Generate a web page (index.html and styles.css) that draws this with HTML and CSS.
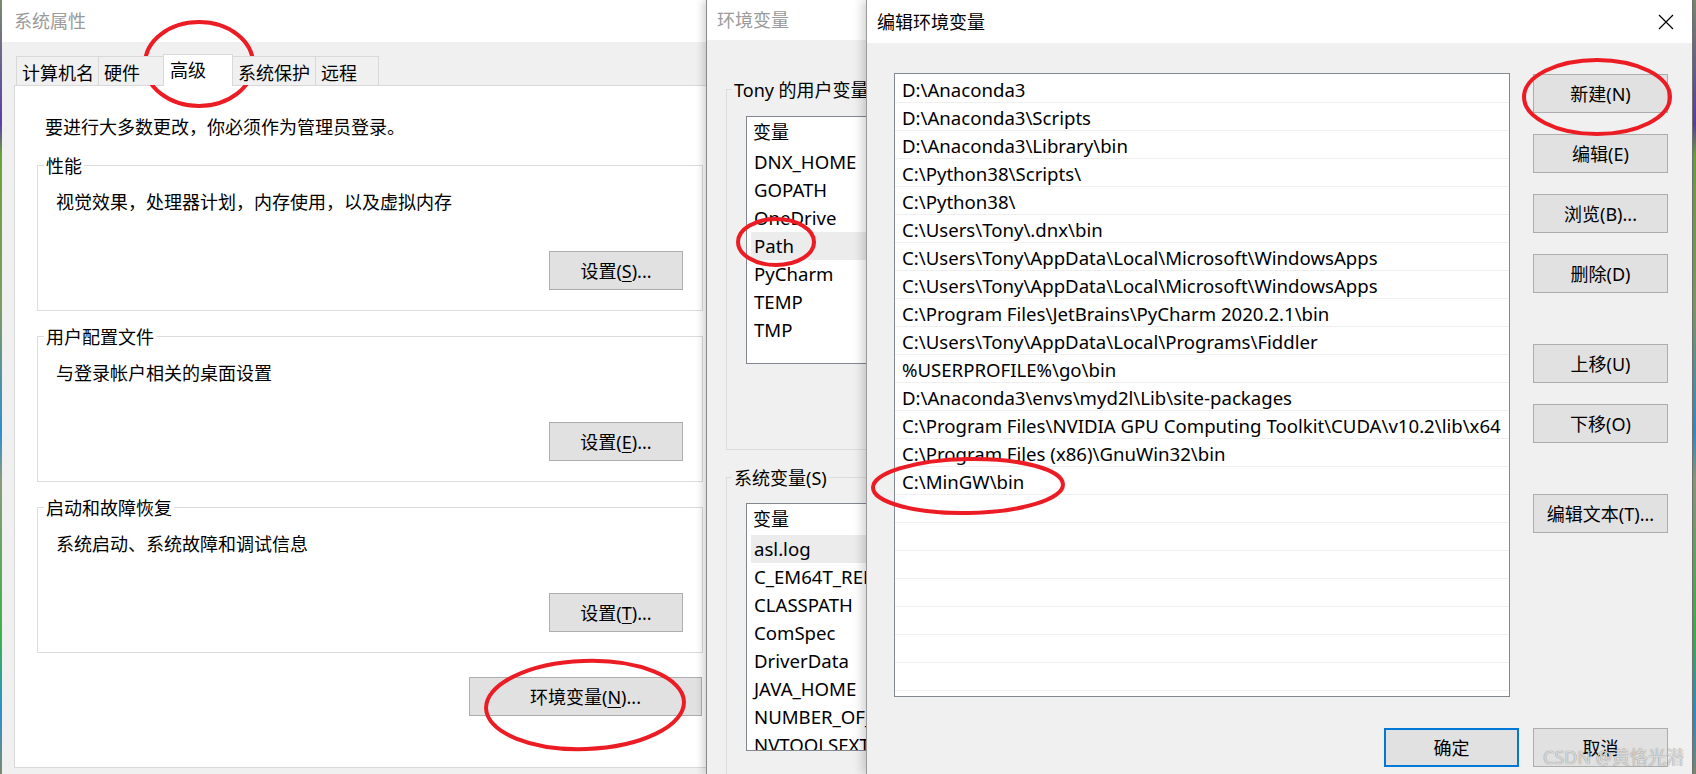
FILE: index.html
```html
<!DOCTYPE html>
<html lang="zh-CN">

<head>
    <meta charset="UTF-8">
    <title>编辑环境变量</title>
    <link rel="stylesheet" href="styles.css">
</head>

<body>
    <div class="desktop">
        <!-- 系统属性 -->
        <div class="window sys">
            <div class="titlebar"><span class="title inactive">系统属性</span></div>
            <div class="sys-body">
                <div class="tabs">
                    <div class="tab t1">计算机名</div>
                    <div class="tab t2">硬件</div>
                    <div class="tab t3 active">高级</div>
                    <div class="tab t4">系统保护</div>
                    <div class="tab t5">远程</div>
                </div>
                <div class="panel">
                    <p class="intro">要进行大多数更改，你必须作为管理员登录。</p>
                    <div class="group">
                        <div class="group-title">性能</div>
                        <div class="group-desc">视觉效果，处理器计划，内存使用，以及虚拟内存</div>
                        <button class="btn btn-set">设置(<u>S</u>)...</button>
                    </div>
                    <div class="group">
                        <div class="group-title">用户配置文件</div>
                        <div class="group-desc">与登录帐户相关的桌面设置</div>
                        <button class="btn btn-set">设置(<u>E</u>)...</button>
                    </div>
                    <div class="group">
                        <div class="group-title">启动和故障恢复</div>
                        <div class="group-desc">系统启动、系统故障和调试信息</div>
                        <button class="btn btn-set">设置(<u>T</u>)...</button>
                    </div>
                    <div class="env-row">
                        <button class="btn btn-env">环境变量(<u>N</u>)...</button>
                    </div>
                </div>
            </div>
        </div>

        <!-- 环境变量 -->
        <div class="window env">
            <div class="titlebar"><span class="title inactive">环境变量</span></div>
            <div class="env-body">
                <div class="env-group user">
                    <div class="group-title">Tony 的用户变量(U)</div>
                    <div class="var-list">
                        <div class="var-head">变量</div>
                        <div class="var-row">DNX_HOME</div>
                        <div class="var-row">GOPATH</div>
                        <div class="var-row">OneDrive</div>
                        <div class="var-row selected">Path</div>
                        <div class="var-row">PyCharm</div>
                        <div class="var-row">TEMP</div>
                        <div class="var-row">TMP</div>
                    </div>
                </div>
                <div class="env-group system">
                    <div class="group-title">系统变量(S)</div>
                    <div class="var-list">
                        <div class="var-head">变量</div>
                        <div class="var-row selected">asl.log</div>
                        <div class="var-row">C_EM64T_REDIST</div>
                        <div class="var-row">CLASSPATH</div>
                        <div class="var-row">ComSpec</div>
                        <div class="var-row">DriverData</div>
                        <div class="var-row">JAVA_HOME</div>
                        <div class="var-row">NUMBER_OF_PROCESSORS</div>
                        <div class="var-row">NVTOOLSEXT_PATH</div>
                    </div>
                </div>
            </div>
        </div>

        <!-- 编辑环境变量 -->
        <div class="window editor">
            <div class="titlebar">
                <span class="title">编辑环境变量</span>
                <svg class="close" width="16" height="16" viewBox="0 0 16 16">
                    <path d="M1 1 L15 15 M15 1 L1 15" stroke="#000" stroke-width="1.2" fill="none" />
                </svg>
            </div>
            <div class="editor-body">
                <div class="editor-main">
                    <div class="path-list">
                        <div class="path-row">D:\Anaconda3</div>
                        <div class="path-row">D:\Anaconda3\Scripts</div>
                        <div class="path-row">D:\Anaconda3\Library\bin</div>
                        <div class="path-row">C:\Python38\Scripts\</div>
                        <div class="path-row">C:\Python38\</div>
                        <div class="path-row">C:\Users\Tony\.dnx\bin</div>
                        <div class="path-row">C:\Users\Tony\AppData\Local\Microsoft\WindowsApps</div>
                        <div class="path-row">C:\Users\Tony\AppData\Local\Microsoft\WindowsApps</div>
                        <div class="path-row">C:\Program Files\JetBrains\PyCharm 2020.2.1\bin</div>
                        <div class="path-row">C:\Users\Tony\AppData\Local\Programs\Fiddler</div>
                        <div class="path-row">%USERPROFILE%\go\bin</div>
                        <div class="path-row">D:\Anaconda3\envs\myd2l\Lib\site-packages</div>
                        <div class="path-row">C:\Program Files\NVIDIA GPU Computing Toolkit\CUDA\v10.2\lib\x64</div>
                        <div class="path-row">C:\Program Files (x86)\GnuWin32\bin</div>
                        <div class="path-row">C:\MinGW\bin</div>
                        <div class="path-row"></div>
                        <div class="path-row"></div>
                        <div class="path-row"></div>
                        <div class="path-row"></div>
                        <div class="path-row"></div>
                        <div class="path-row"></div>
                        <div class="path-row"></div>
                    </div>
                    <div class="side-buttons">
                        <button class="btn btn-side">新建(N)</button>
                        <button class="btn btn-side">编辑(E)</button>
                        <button class="btn btn-side">浏览(B)...</button>
                        <button class="btn btn-side">删除(D)</button>
                        <button class="btn btn-side far">上移(U)</button>
                        <button class="btn btn-side">下移(O)</button>
                        <button class="btn btn-side far">编辑文本(T)...</button>
                    </div>
                </div>
                <div class="editor-footer">
                    <button class="btn btn-side btn-ok">确定</button>
                    <button class="btn btn-side">取消</button>
                </div>
            </div>
        </div>

        <!-- 红圈标注 -->
        <svg class="marks" width="1696" height="774" viewBox="0 0 1696 774">
            <g fill="none" stroke="#ec1c24" stroke-width="4">
                <ellipse cx="199" cy="64" rx="54" ry="42" />
                <ellipse cx="585" cy="705" rx="99" ry="44" transform="rotate(-2 585 705)" />
                <ellipse cx="776" cy="242" rx="38" ry="23" />
                <ellipse cx="1597" cy="97" rx="73" ry="37" />
                <ellipse cx="968" cy="486" rx="95" ry="27" transform="rotate(-1 968 486)" />
            </g>
        </svg>

        <div class="watermark">CSDN @黄恪光潜</div>
    </div>
</body>

</html>
```

FILE: styles.css
```css
body {
    margin: 0;
    font-family: "Noto Sans", "Noto Sans CJK SC", sans-serif;
    font-size: 18px;
    color: #000;
    overflow: hidden;
}

.desktop {
    position: relative;
    width: 1696px;
    height: 774px;
    overflow: hidden;
    background: linear-gradient(#7a8a70 0%, #5b3ea8 16%, #6aa33a 20%, #7f9a66 40%, #2d8fd0 56%, #8b9a7a 62%, #3bb34a 82%, #2d8fd0 92%, #7a8a70 100%);
}

.window {
    position: absolute;
    top: 0;
    height: 774px;
    box-sizing: border-box;
    background-color: #f0f0f0;
}

.titlebar {
    background-color: #fff;
    display: flex;
    align-items: center;
    justify-content: space-between;
}

.title {
    line-height: 24px;
}

.title.inactive {
    color: #9a9a9a;
}

.btn {
    font-family: inherit;
    font-size: 18px;
    color: #000;
    background-color: #e1e1e1;
    border: 1px solid #adadad;
    padding: 0;
    height: 39px;
    box-sizing: border-box;
    line-height: 24px;
}

.btn u {
    text-underline-offset: 3px;
}

/* 系统属性 */

.sys {
    left: 2px;
    width: 720px;
}

.sys .titlebar {
    height: 42px;
    padding-left: 12px;
}

.sys-body {
    padding: 12px 0 0 12px;
}

.tabs {
    display: flex;
    align-items: flex-end;
    height: 31px;
    margin-left: 2px;
    position: relative;
    z-index: 1;
}

.tab {
    height: 29px;
    box-sizing: border-box;
    border: 1px solid #d9d9d9;
    border-bottom: none;
    background-color: #f0f0f0;
    padding: 4px 0 0 5px;
    line-height: 24px;
    margin-left: -1px;
}

.tab.t1 {
    width: 83px;
    margin-left: 0;
}

.tab.t2 {
    width: 66px;
}

.tab.t3 {
    width: 70px;
}

.tab.t4 {
    width: 84px;
}

.tab.t5 {
    width: 64px;
}

.tab.active {
    height: 32px;
    margin-bottom: -1px;
    background-color: #fff;
    padding-top: 3px;
    padding-left: 6px;
}

.panel {
    width: 699px;
    height: 683px;
    box-sizing: border-box;
    border: 1px solid #d9d9d9;
    background-color: #fff;
    padding: 29px 0 0 22px;
}

.intro {
    margin: 0 0 0 8px;
    line-height: 24px;
}

.group {
    width: 666px;
    height: 146px;
    box-sizing: border-box;
    border: 1px solid #dcdcdc;
    margin-top: 25px;
    display: flex;
    flex-direction: column;
    align-items: flex-start;
}

.intro + .group {
    margin-top: 26px;
}

.group-title {
    margin: -12px 0 0 6px;
    padding: 0 2px;
    line-height: 24px;
    background-color: #fff;
}

.group-desc {
    margin: 12px 0 0 18px;
    line-height: 24px;
}

.btn-set {
    width: 134px;
    margin-top: auto;
    margin-right: 19px;
    margin-bottom: 20px;
    align-self: flex-end;
}

.env-row {
    width: 665px;
    display: flex;
    justify-content: flex-end;
    margin-top: 24px;
}

.btn-env {
    width: 233px;
}

/* 环境变量 */

.env {
    left: 706px;
    width: 260px;
    border-left: 1px solid #8a8a8a;
    box-shadow: -3px 0 8px rgba(0, 0, 0, 0.18);
}

.env .titlebar {
    height: 40px;
    padding-left: 10px;
}

.env-body {
    padding-left: 19px;
}

.env-group {
    border: 1px solid #dcdcdc;
    border-right: none;
    box-sizing: border-box;
    display: flex;
    flex-direction: column;
    align-items: flex-start;
}

.env-group .group-title {
    background-color: #f0f0f0;
    margin-left: 5px;
}

.env-group.user {
    margin-top: 49px;
    height: 361px;
}

.env-group.system {
    margin-top: 27px;
    height: 320px;
}

.var-list {
    width: 240px;
    height: 248px;
    box-sizing: border-box;
    border: 1px solid #828790;
    background-color: #fff;
    margin: 14px 0 0 19px;
    overflow: hidden;
    white-space: nowrap;
}

.system .var-list {
    margin-top: 13px;
}

.var-head {
    height: 31px;
    line-height: 31px;
    padding-left: 6px;
}

.var-row {
    height: 28px;
    line-height: 28px;
    margin-left: 4px;
    padding-left: 3px;
    font-size: 18.6px;
}

.var-row.selected {
    background-color: #ececec;
}

/* 编辑环境变量 */

.editor {
    left: 866px;
    width: 827px;
    border-left: 1px solid #9a9a9a;
    border-right: 1px solid #6f6f6f;
    box-shadow: -3px 0 10px rgba(0, 0, 0, 0.2);
}

.editor .titlebar {
    height: 43px;
    padding: 0 18px 0 10px;
}

.editor-body {
    padding: 30px 24px 0 27px;
}

.editor-main {
    display: flex;
    align-items: flex-start;
}

.path-list {
    width: 616px;
    height: 624px;
    box-sizing: border-box;
    border: 1px solid #828790;
    background-color: #fff;
    padding-top: 1px;
    overflow: hidden;
}

.path-row {
    height: 28px;
    box-sizing: border-box;
    border-bottom: 1px solid #efefef;
    line-height: 29px;
    padding-left: 7px;
    white-space: nowrap;
    font-size: 18.6px;
}

.side-buttons {
    display: flex;
    flex-direction: column;
    margin-left: 23px;
    padding-top: 1px;
}

.btn-side {
    width: 135px;
}

.side-buttons .btn-side + .btn-side {
    margin-top: 21px;
}

.side-buttons .btn-side.far {
    margin-top: 51px;
}

.editor-footer {
    display: flex;
    justify-content: flex-end;
    gap: 14px;
    margin-top: 31px;
}

.btn-ok {
    border: 2px solid #0078d7;
}

/* 标注 */

.marks {
    position: absolute;
    left: 0;
    top: 0;
    pointer-events: none;
}

.watermark {
    position: absolute;
    left: 1543px;
    top: 744px;
    font-size: 18px;
    line-height: 26px;
    color: rgba(235, 235, 235, 0.85);
    text-shadow: 0 0 1px rgba(0, 0, 0, 0.55);
    white-space: nowrap;
    pointer-events: none;
}
```
